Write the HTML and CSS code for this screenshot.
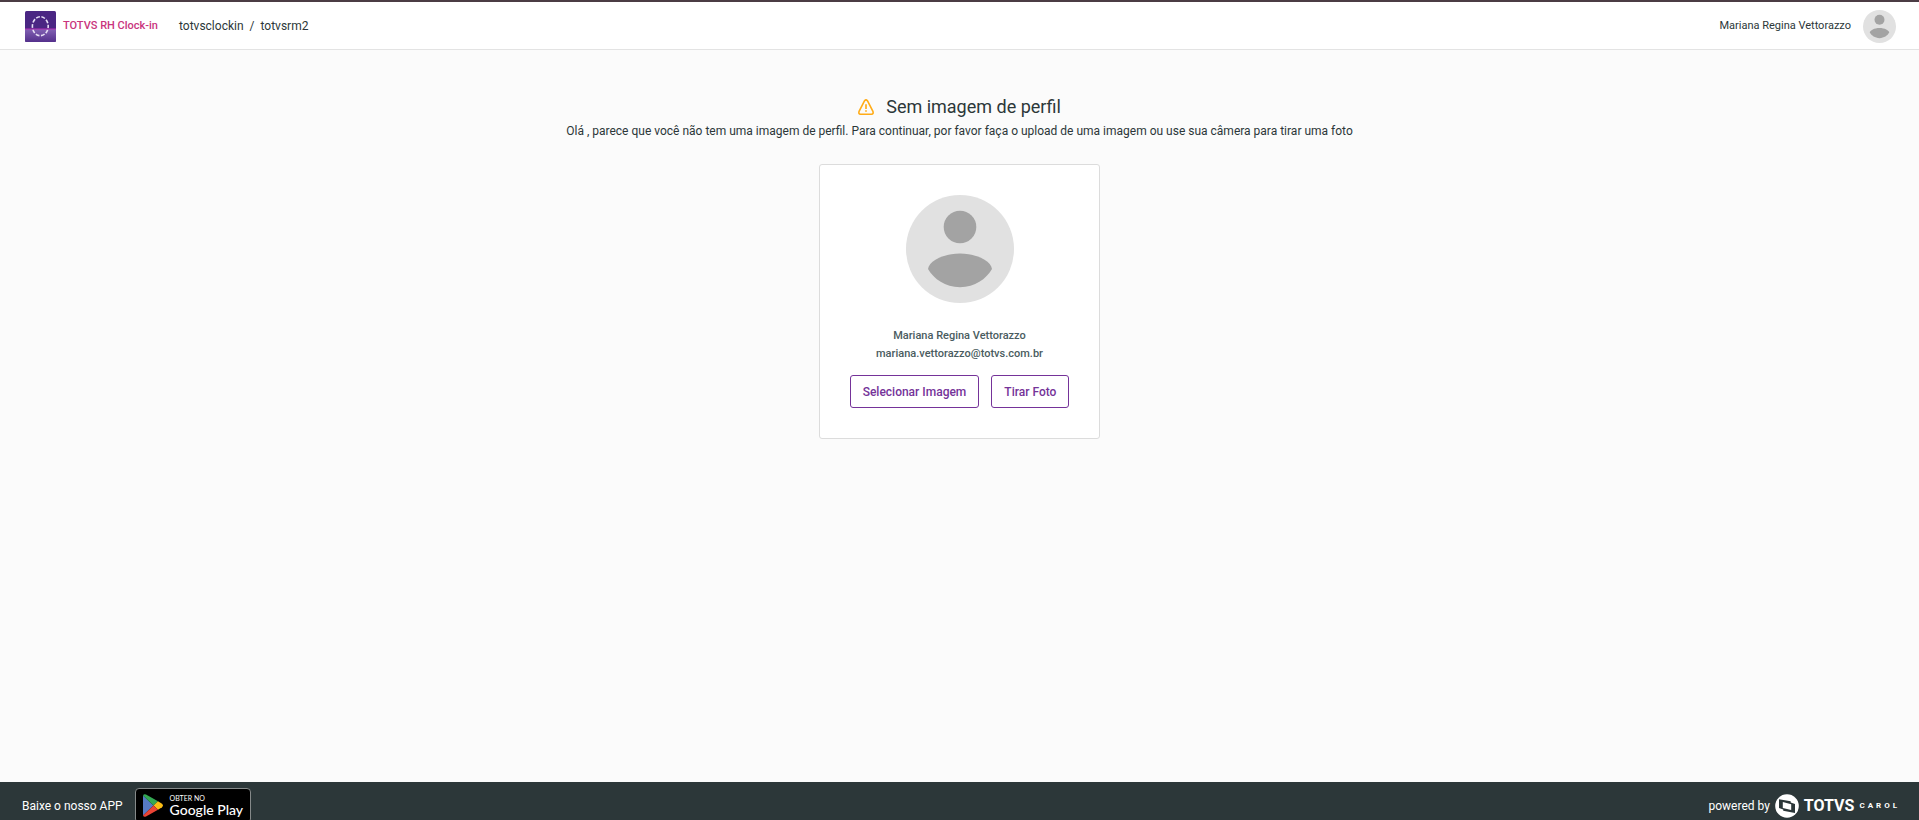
FILE: index.html
```html
<!DOCTYPE html>
<html lang="pt-BR">
<head>
  <meta charset="UTF-8" />
  <meta name="viewport" content="width=device-width, initial-scale=1" />
  <title>TOTVS RH Clock-in</title>
  <link rel="stylesheet" href="styles.css">
</head>
<body>

  <!-- Shared avatar drawing -->
  <svg class="sprite" aria-hidden="true">
    <symbol id="avatar" viewBox="0 0 108 108">
      <circle cx="54" cy="54" r="54" fill="#e1e1e1" />
      <circle cx="54" cy="32" r="16.3" fill="#a3a3a3" />
      <path d="M22 74C23 66 37 58.500 54 58.500S85 66 86 74C80 84 69 92.200 54 92.200S28 84 22 74Z" fill="#a3a3a3" />
    </symbol>
  </svg>

  <header class="header">
    <a class="brand" href="#">
      <svg class="brand-logo" viewBox="0 0 31 31" aria-hidden="true">
        <defs>
          <linearGradient id="scan" x1="0" y1="0" x2="0" y2="1">
            <stop offset="0" stop-color="#8262b4" />
            <stop offset="1" stop-color="#54308c" />
          </linearGradient>
        </defs>
        <rect width="31" height="31" rx="1.500" fill="#4a2683" />
        <path d="M0 18H31V29.500A1.500 1.500 0 0 1 29.500 31H1.500A1.500 1.500 0 0 1 0 29.500Z" fill="url(#scan)" />
        <ellipse cx="15.300" cy="15.200" rx="7.900" ry="9.500" fill="none" stroke="#e6def4" stroke-width="1.600" stroke-dasharray="3.900 1.590" stroke-dashoffset="1.950" />
        <path d="M0 18H31" stroke="#b32fb4" stroke-width="1" />
      </svg>
      <span class="brand-name">TOTVS RH Clock-in</span>
    </a>
    <nav class="breadcrumb">
      <a href="#">totvsclockin</a>
      <span>/</span>
      <a href="#">totvsrm2</a>
    </nav>
    <div class="user">
      <span class="user-name">Mariana Regina Vettorazzo</span>
      <svg class="user-avatar" aria-hidden="true"><use href="#avatar" /></svg>
    </div>
  </header>

  <main class="content">
    <h1 class="title">
      <svg class="title-icon" viewBox="0 0 16 16" fill="none" stroke="#ffac18" aria-hidden="true">
        <path d="M6.600 1.700Q8 0 9.400 1.700L14.800 12.100Q15.900 15.200 13.500 15.200H2.500Q.1 15.200 1.200 12.100Z" stroke-width="1.600" stroke-linejoin="round" />
        <path d="M8 5.200V10M8 11.300V12.700" stroke-width="1.700" />
      </svg>
      Sem imagem de perfil
    </h1>
    <p class="message">Olá , parece que você não tem uma imagem de perfil. Para continuar, por favor faça o upload de uma imagem ou use sua câmera para tirar uma foto</p>

    <section class="card">
      <svg class="card-avatar" aria-hidden="true"><use href="#avatar" /></svg>
      <p class="card-text">Mariana Regina Vettorazzo</p>
      <p class="card-text">mariana.vettorazzo@totvs.com.br</p>
      <div class="actions">
        <button type="button" class="btn">Selecionar Imagem</button>
        <button type="button" class="btn">Tirar Foto</button>
      </div>
    </section>
  </main>

  <footer class="footer">
    <div class="download">
      <span>Baixe o nosso APP</span>
      <a class="play-badge" href="#">
        <svg class="play-icon" viewBox="0 0 20 23" aria-hidden="true">
          <path d="M0 1.500V21.500L10.500 11.500Z" fill="#567ac5" />
          <path d="M0 1.500Q.8-.4 3 .5L15 7.300L10.500 11.500Z" fill="#34a853" />
          <path d="M15 7.300L19 9.700Q21 11.500 19 13.200L15 15.700L10.500 11.500Z" fill="#fbbc15" />
          <path d="M0 21.500Q.8 23.400 3 22.500L15 15.700L10.500 11.500Z" fill="#ea4335" />
        </svg>
        <span class="play-text">
          <small>OBTER NO</small>
          <strong>Google Play</strong>
        </span>
      </a>
    </div>
    <div class="powered">
      <span>powered by</span>
      <svg class="totvs-icon" viewBox="0 0 24 24" aria-hidden="true">
        <circle cx="12" cy="12" r="11.800" fill="#fff" />
        <path d="M4 5.300L15.700 7.200V8.600L20 10V18.900L8.200 16.800V15.400L4 13.900Z" fill="#2c3739" />
        <path d="M7.800 8L16.200 10.200V16.100L7.800 13.900Z" fill="#fff" />
      </svg>
      <strong class="totvs">TOTVS</strong>
      <span class="carol">CAROL</span>
    </div>
  </footer>

</body>
</html>
```
FILE: styles.css
```css
:root {
  --dark: #2c3739;
  --purple: #753399;
  --pink: #c9357d;
}

* {
  box-sizing: border-box;
}

body {
  margin: 0;
  height: 100vh;
  overflow: hidden;
  background: #fbfbfb;
  color: var(--dark);
  font-family: Roboto, sans-serif;
  font-size: 12px;
  line-height: 18px;
}

a {
  color: inherit;
  text-decoration: none;
}

svg {
  display: block;
  flex: none;
}

.sprite {
  position: absolute;
  width: 0;
  height: 0;
}

/* Header */
.header {
  display: flex;
  align-items: center;
  height: 50px;
  padding: 2px 23px 0 25px;
  background: #fff;
  border-top: 2px solid #4b3c44;
  border-bottom: 1px solid #e3e3e3;
}

.brand {
  display: flex;
  align-items: center;
  gap: 7px;
}

.brand-logo {
  width: 31px;
  height: 31px;
}

.brand-name,
.breadcrumb,
.user-name {
  padding-bottom: 2px;
}

.brand-name {
  color: var(--pink);
  font-size: 11px;
  font-weight: 500;
}

.breadcrumb {
  display: flex;
  gap: 6px;
  margin-left: 21px;
}

.user {
  display: flex;
  align-items: center;
  gap: 12px;
  margin-left: auto;
  font-size: 11px;
}

.user-avatar {
  width: 33px;
  height: 33px;
}

/* Content */
.content {
  display: flex;
  flex-direction: column;
  align-items: center;
  height: calc(100vh - 88px);
  padding-top: 44px;
}

.title {
  display: flex;
  align-items: center;
  gap: 12px;
  margin: 0;
  font-size: 18px;
  font-weight: 400;
  line-height: 26px;
}

.title-icon {
  width: 16px;
  height: 16px;
}

.message {
  margin: 2px 0 24px;
}

.card {
  display: flex;
  flex-direction: column;
  align-items: center;
  padding: 30px;
  background: #fff;
  border: 1px solid #dcdcdc;
  border-radius: 3px;
}

.card-avatar {
  width: 108px;
  height: 108px;
  margin-bottom: 24px;
}

.card-text {
  margin: 0;
  color: #4a5c60;
  font-size: 11px;
  font-weight: 500;
}

.actions {
  display: flex;
  gap: 12px;
  margin-top: 12px;
}

.btn {
  height: 33px;
  padding: 0 12px;
  background: #fff;
  border: 1px solid var(--purple);
  border-radius: 3px;
  color: var(--purple);
  font-family: inherit;
  font-size: 12px;
  font-weight: 500;
  cursor: pointer;
}

/* Footer */
.footer {
  display: flex;
  align-items: center;
  justify-content: space-between;
  height: 47px;
  padding: 0 19px 0 22px;
  background: var(--dark);
  color: #fff;
}

.download {
  display: flex;
  align-items: center;
  gap: 12px;
}

.play-badge {
  display: flex;
  align-items: center;
  gap: 7px;
  width: 116px;
  height: 35px;
  padding: 0 7px;
  background: #000;
  border: 1px solid #858989;
  border-radius: 4px;
}

.play-icon {
  width: 20px;
  height: 23px;
}

.play-text {
  display: flex;
  flex-direction: column;
  font-family: Lato, sans-serif;
  white-space: nowrap;
}

.play-text small {
  font-size: 7px;
  line-height: 8px;
}

.play-text strong {
  font-size: 14px;
  font-weight: 500;
  line-height: 16px;
}

.powered {
  display: flex;
  align-items: center;
  gap: 5px;
}

.totvs-icon {
  width: 24px;
  height: 24px;
}

.totvs {
  font-size: 16px;
  font-weight: 700;
}

.carol {
  font-size: 8px;
  font-weight: 700;
  letter-spacing: 3px;
}
```
